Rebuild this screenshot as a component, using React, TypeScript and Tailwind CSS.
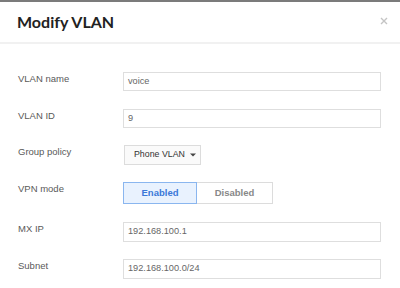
import React from "react";

const Field = ({ value }: { value: string }) => (
  <div className="w-[258px] h-full border border-[#dedede] flex items-center pl-[4px] text-[9.2px] text-[#666] bg-white">
    {value}
  </div>
);

const Row = ({
  label,
  className,
  children,
}: {
  label: string;
  className: string;
  children: React.ReactNode;
}) => (
  <div className={`flex items-start ${className}`}>
    <div className="w-[123px] shrink-0 pl-[18px] text-[9.5px] leading-[14px] text-[#595959]">{label}</div>
    <div className="h-full flex">{children}</div>
  </div>
);

export default function App() {
  return (
    <div className="w-[400px] h-[288px] bg-white overflow-hidden font-['Liberation_Sans',Arial,sans-serif]">
      <div className="h-[2px] bg-[#7b7b7b]" />
      <div className="h-[42px] flex items-center justify-between pl-[17px] pr-[12px] border-b-2 border-[#f1f1f1]">
        <h1 className="text-[16px] font-bold text-[#222] font-['Lato',sans-serif]">Modify VLAN</h1>
        <svg width="8" height="8" viewBox="0 0 8 8" className="mt-[-3px]">
          <path d="M1 1 L7 7 M7 1 L1 7" stroke="#c4c4c4" strokeWidth="1.4" />
        </svg>
      </div>
      <div className="pt-[28px]">
        <Row label="VLAN name" className="h-[19px]">
          <Field value="voice" />
        </Row>
        <Row label="VLAN ID" className="h-[19px] mt-[18px]">
          <Field value="9" />
        </Row>
        <Row label="Group policy" className="h-[20px] mt-[17px]">
          <div className="w-[77px] h-full ml-[1px] border border-[#dcdcdc] bg-[#fafafa] flex items-center pl-[9px] gap-[5px] text-[8.8px] text-[#333] whitespace-nowrap">
            Phone VLAN
            <svg width="6" height="4" viewBox="0 0 6 4">
              <path d="M0 0.5 L6 0.5 L3 3.5 Z" fill="#444" />
            </svg>
          </div>
        </Row>
        <Row label="VPN mode" className="h-[22px] mt-[17px]">
          <div className="flex h-full">
            <div className="w-[74px] h-full border border-[#8ab6ef] bg-[#e9f2fe] flex items-center justify-center text-[9.5px] font-bold text-[#3b78d8]">
              Enabled
            </div>
            <div className="w-[76px] h-full border border-l-0 border-[#dcdcdc] bg-white flex items-center justify-center text-[9.5px] font-bold text-[#888]">
              Disabled
            </div>
          </div>
        </Row>
        <Row label="MX IP" className="h-[20px] mt-[18px]">
          <Field value="192.168.100.1" />
        </Row>
        <Row label="Subnet" className="h-[20px] mt-[17px]">
          <Field value="192.168.100.0/24" />
        </Row>
      </div>
    </div>
  );
}
